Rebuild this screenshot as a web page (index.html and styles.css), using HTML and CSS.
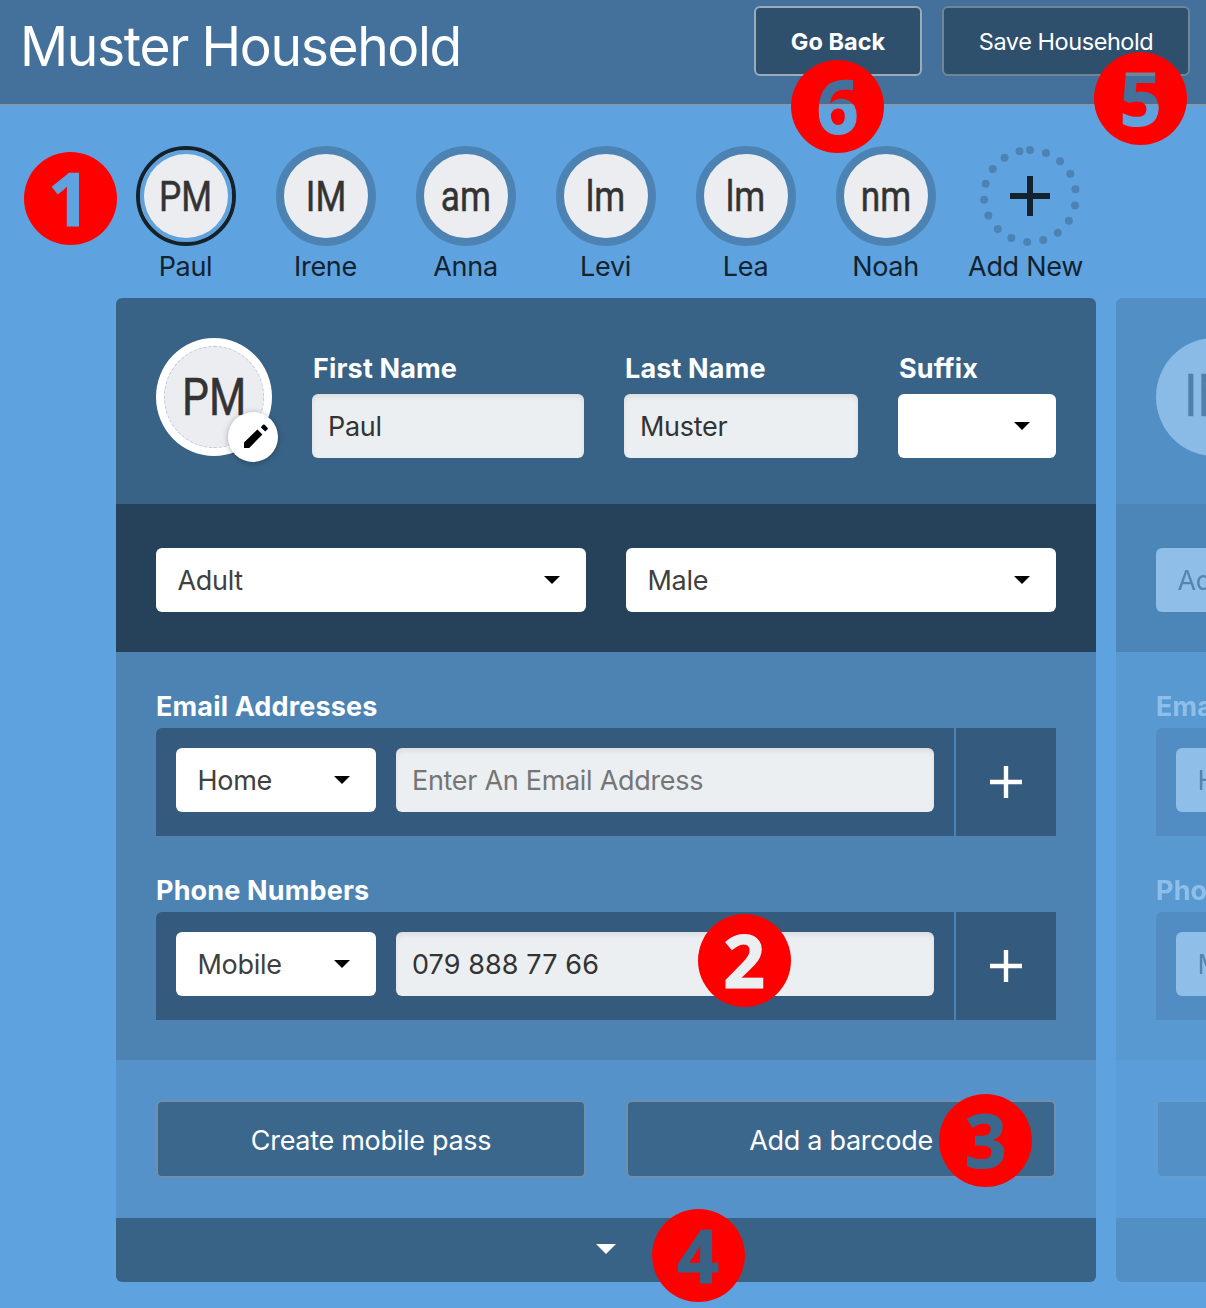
FILE: index.html
```html
<!DOCTYPE html>
<html lang="en">
<head>
<meta charset="utf-8">
<title>Muster Household</title>
<link rel="stylesheet" href="styles.css">
</head>
<body>
<header class="topbar">
  <h1 class="title">Muster Household</h1>
  <div class="actions">
    <button class="top-btn top-btn-back">Go Back</button>
    <button class="top-btn top-btn-save">Save Household</button>
  </div>
</header>

<nav class="members">
  <div class="member"><div class="ring ring-active"><span class="initials">PM</span></div><span class="name">Paul</span></div>
  <div class="member"><div class="ring"><span class="initials">IM</span></div><span class="name">Irene</span></div>
  <div class="member"><div class="ring"><span class="initials">am</span></div><span class="name">Anna</span></div>
  <div class="member"><div class="ring"><span class="initials">lm</span></div><span class="name">Levi</span></div>
  <div class="member"><div class="ring"><span class="initials">lm</span></div><span class="name">Lea</span></div>
  <div class="member"><div class="ring"><span class="initials">nm</span></div><span class="name">Noah</span></div>
  <div class="member">
    <svg class="add-ring" viewBox="0 0 100 100">
      <circle cx="50" cy="50" r="46" fill="none" stroke="#4c83b3" stroke-width="8" stroke-linecap="round" stroke-dasharray="0 16.35" transform="rotate(-90 50 50)"/>
      <path d="M50 30V70M30 50H70" stroke="#14222d" stroke-width="6"/>
    </svg>
    <span class="name">Add New</span>
  </div>
</nav>

<main class="cards">
  <section class="card">
    <div class="identity">
      <div class="photo"><span class="photo-initials">PM</span>
        <span class="edit"><svg width="24" height="24" viewBox="0 0 24 24"><path d="M0 24V18.6L13.4 5.4L18.4 10.4L5.2 24ZM16.8 3.2L19 .8Q19.8 0 20.6.8L23.5 3.7Q24.3 4.5 23.5 5.3L21.2 7.5Z"/></svg></span>
      </div>
      <div class="field first"><label class="label">First Name</label><div class="input">Paul</div></div>
      <div class="field last"><label class="label">Last Name</label><div class="input">Muster</div></div>
      <div class="field suffix"><label class="label">Suffix</label><div class="select"><i class="caret"></i></div></div>
    </div>
    <div class="traits">
      <div class="select"><span>Adult</span><i class="caret"></i></div>
      <div class="select"><span>Male</span><i class="caret"></i></div>
    </div>
    <div class="contacts">
      <label class="label">Email Addresses</label>
      <div class="group">
        <div class="group-main"><div class="select kind"><span>Home</span><i class="caret"></i></div><div class="input placeholder">Enter An Email Address</div></div>
        <div class="group-add"><svg width="32" height="32" viewBox="0 0 32 32"><path d="M16 0V32M0 16H32" stroke="#fff" stroke-width="4.4"/></svg></div>
      </div>
      <label class="label">Phone Numbers</label>
      <div class="group">
        <div class="group-main"><div class="select kind"><span>Mobile</span><i class="caret"></i></div><div class="input phone">079 888 77 66</div></div>
        <div class="group-add"><svg width="32" height="32" viewBox="0 0 32 32"><path d="M16 0V32M0 16H32" stroke="#fff" stroke-width="4.4"/></svg></div>
      </div>
    </div>
    <div class="passes">
      <button class="pass-btn">Create mobile pass</button>
      <button class="pass-btn">Add a barcode</button>
    </div>
    <div class="expand"><i class="expand-caret"></i></div>
  </section>

  <section class="card card-next">
    <div class="identity">
      <div class="photo"><span class="photo-initials">IM</span></div>
    </div>
    <div class="traits">
      <div class="select"><span>Adult</span></div>
    </div>
    <div class="contacts">
      <label class="label">Email Addresses</label>
      <div class="group"><div class="group-main"><div class="select kind"><span>Home</span></div></div></div>
      <label class="label">Phone Numbers</label>
      <div class="group"><div class="group-main"><div class="select kind"><span>Mobile</span></div></div></div>
    </div>
    <div class="passes"><button class="pass-btn"></button></div>
    <div class="expand"></div>
  </section>
</main>

<div class="badge badge-1"><span class="digit">1</span></div>
<div class="badge badge-2"><span class="digit">2</span></div>
<div class="badge badge-3"><span class="digit">3</span></div>
<div class="badge badge-4"><span class="digit">4</span></div>
<div class="badge badge-5"><span class="digit">5</span></div>
<div class="badge badge-6"><span class="digit">6</span></div>
</body>
</html>
```
FILE: styles.css
```css
* { box-sizing: border-box; }
body {
  margin: 0;
  width: 1206px;
  height: 1308px;
  overflow: hidden;
  position: relative;
  background: #5ea3e0;
  color: #333;
  font: 27px/32px Inter, "Liberation Sans", sans-serif;
  letter-spacing: -0.3px;
}
button { font: inherit; letter-spacing: inherit; color: #fff; margin: 0; padding: 0; }

.topbar {
  height: 106px;
  padding: 6px 16px 0 20px;
  display: flex;
  justify-content: space-between;
  background: #43719b;
  border-bottom: 2px solid #7f9ab1;
}
.title {
  margin: 8px 0 0;
  color: #fff;
  font-size: 55px;
  font-weight: 400;
  line-height: 64px;
  letter-spacing: -1.4px;
  white-space: nowrap;
  transform: scaleX(.97);
  transform-origin: 0 0;
}
.actions { display: flex; gap: 20px; }
.top-btn {
  height: 70px;
  padding-top: 2px;
  border: 2px solid #6f8598;
  border-radius: 6px;
  background: #2e506d;
  font-size: 23.5px;
}
.top-btn-back { width: 168px; font-weight: 700; letter-spacing: 0; border-color: #9aabba; }
.top-btn-save { width: 248px; letter-spacing: -0.45px; }

.members { display: flex; padding: 40px 0 0 116px; height: 192px; }
.member { width: 140px; display: flex; flex-direction: column; align-items: center; }
.ring {
  width: 100px;
  height: 100px;
  border: 8px solid #4c83b3;
  border-radius: 50%;
  background: #ecedf1;
  display: flex;
  align-items: center;
  justify-content: center;
}
.ring-active { border: 4px solid #14222d; box-shadow: inset 0 0 0 4px #5ea3e0; }
.initials, .photo-initials { letter-spacing: 0; -webkit-text-stroke: .5px currentColor; }
.initials { font: 42px/84px Roboto, sans-serif; transform: translateY(.5px) scaleX(.84); }
.add-ring { width: 100px; height: 100px; margin-left: 8px; }
.name { margin: 5px 1px 0 0; color: #14222d; white-space: nowrap; }

.cards { display: flex; gap: 20px; padding-left: 116px; }
.card { width: 980px; border-radius: 6px; overflow: hidden; flex: none; }
.card-next { width: 90px; opacity: .3; border-radius: 6px 0 0 6px; }
.identity { height: 206px; padding: 40px; display: flex; background: #396386; }
.photo {
  position: relative;
  flex: none;
  width: 116px;
  height: 118px;
  margin-right: 40px;
  border: 8px solid #fff;
  border-radius: 50%;
  background: #ecedf1;
  display: flex;
  align-items: center;
  justify-content: center;
}
.photo::before {
  content: "";
  position: absolute;
  inset: 0;
  border: 1px dashed #bccad9;
  border-radius: 50%;
}
.card-next .photo::before { display: none; }
.card-next .photo { background: #f0f1f5; border-color: #f0f1f5; }
.photo-initials { font: 52px/60px Roboto, sans-serif; transform: translateY(.5px) scaleX(.82); }
.card-next .photo-initials { font-size: 59px; transform: translate(-1.5px, -1px) scaleX(.84); }
.edit {
  position: absolute;
  left: 64px;
  top: 66px;
  width: 50px;
  height: 50px;
  border-radius: 50%;
  background: #fff;
  box-shadow: 0 1px 6px rgba(0, 0, 0, .3);
  display: flex;
  align-items: center;
  justify-content: center;
  padding: 0 0 2px 6px;
}
.field { padding-top: 15px; margin-right: 40px; }
.field .label { padding-left: 1px; margin-bottom: 9px; }
.first { width: 272px; }
.last { width: 234px; }
.suffix { width: 158px; margin: 0; }
.label { display: block; color: #fff; font-weight: 700; letter-spacing: .15px; white-space: nowrap; }
.input, .select {
  height: 64px;
  border-radius: 6px;
  line-height: 64px;
  white-space: nowrap;
}
.input { background: #ebeff2; padding: 1px 0 0 16px; box-shadow: inset 0 3px 5px rgba(0, 0, 0, .07); }
.phone { letter-spacing: .1px; }
.placeholder { color: #757575; }
.select {
  background: #fff;
  color: #404040;
  padding: 0 26px 0 21.5px;
  display: flex;
  align-items: center;
  justify-content: space-between;
}
.select span { padding-top: 2px; }
.caret {
  margin-left: auto;
  width: 16px;
  height: 8px;
  background: #000;
  clip-path: polygon(0 0, 100% 0, 50% 100%);
}
.traits { height: 148px; padding: 44px 40px; display: flex; gap: 40px; background: #26425b; }
.traits .select { flex: 1; }
.contacts { height: 408px; padding: 39px 40px 0; background: #4c83b3; }
.contacts .label { margin-bottom: 5px; }
.group { display: flex; gap: 2px; height: 108px; margin-bottom: 39px; }
.group-main {
  flex: 1;
  padding: 20px;
  display: flex;
  gap: 20px;
  background: #345a7e;
  border-radius: 6px 0 0 0;
}
.kind { width: 200px; }
.group-main .input { flex: 1; }
.group-add { width: 100px; background: #345a7e; display: flex; align-items: center; justify-content: center; }
.passes { height: 158px; padding: 40px; display: flex; gap: 40px; background: #5492c9; }
.pass-btn { flex: 1; height: 78px; padding-top: 3px; border: 2px solid #6f8fac; border-radius: 6px; background: #3c678c; }
.expand { height: 64px; background: #396386; display: flex; justify-content: center; }
.expand-caret {
  margin-top: 26px;
  width: 20px;
  height: 10px;
  background: #fff;
  clip-path: polygon(0 0, 100% 0, 50% 100%);
}

/* The next member's card runs on past the right edge of the window */
.card-next .identity, .card-next .traits, .card-next .contacts, .card-next .passes { padding-right: 0; }
.card-next .traits .select, .card-next .kind, .card-next .pass-btn { flex: none; width: 430px; }

/* Numbered callouts placed over the interface */
.badge {
  position: absolute;
  width: 93px;
  height: 93px;
  border-radius: 50%;
  background: #f00;
  text-align: center;
}
.digit { display: block; font: 700 73px/91px "Open Sans", sans-serif; letter-spacing: 0; -webkit-text-stroke: 1.2px currentColor; }
.badge-1 { left: 23.5px; top: 152px; color: #5ea3e0; }
.badge-1 .digit { transform: translateX(-1px); }
.badge-2 { left: 697.5px; top: 914px; color: #ebeff2; }
.badge-3 { left: 939px; top: 1093.5px; color: #3c678c; }
.badge-4 { left: 651.5px; top: 1208.5px; color: #396386; }
.badge-5 { left: 1094px; top: 52px; }
.badge-6 { left: 791px; top: 60px; }
.badge-5 .digit, .badge-6 .digit { color: transparent; -webkit-background-clip: text; background-clip: text; }
.badge-5 .digit { background-image: linear-gradient(#6f8598 24px, #43719b 24px 52px, #7f9ab1 52px 54px, #5ea3e0 54px); }
.badge-6 .digit { background-image: linear-gradient(#43719b 44px, #7f9ab1 44px 46px, #5ea3e0 46px); }
```
